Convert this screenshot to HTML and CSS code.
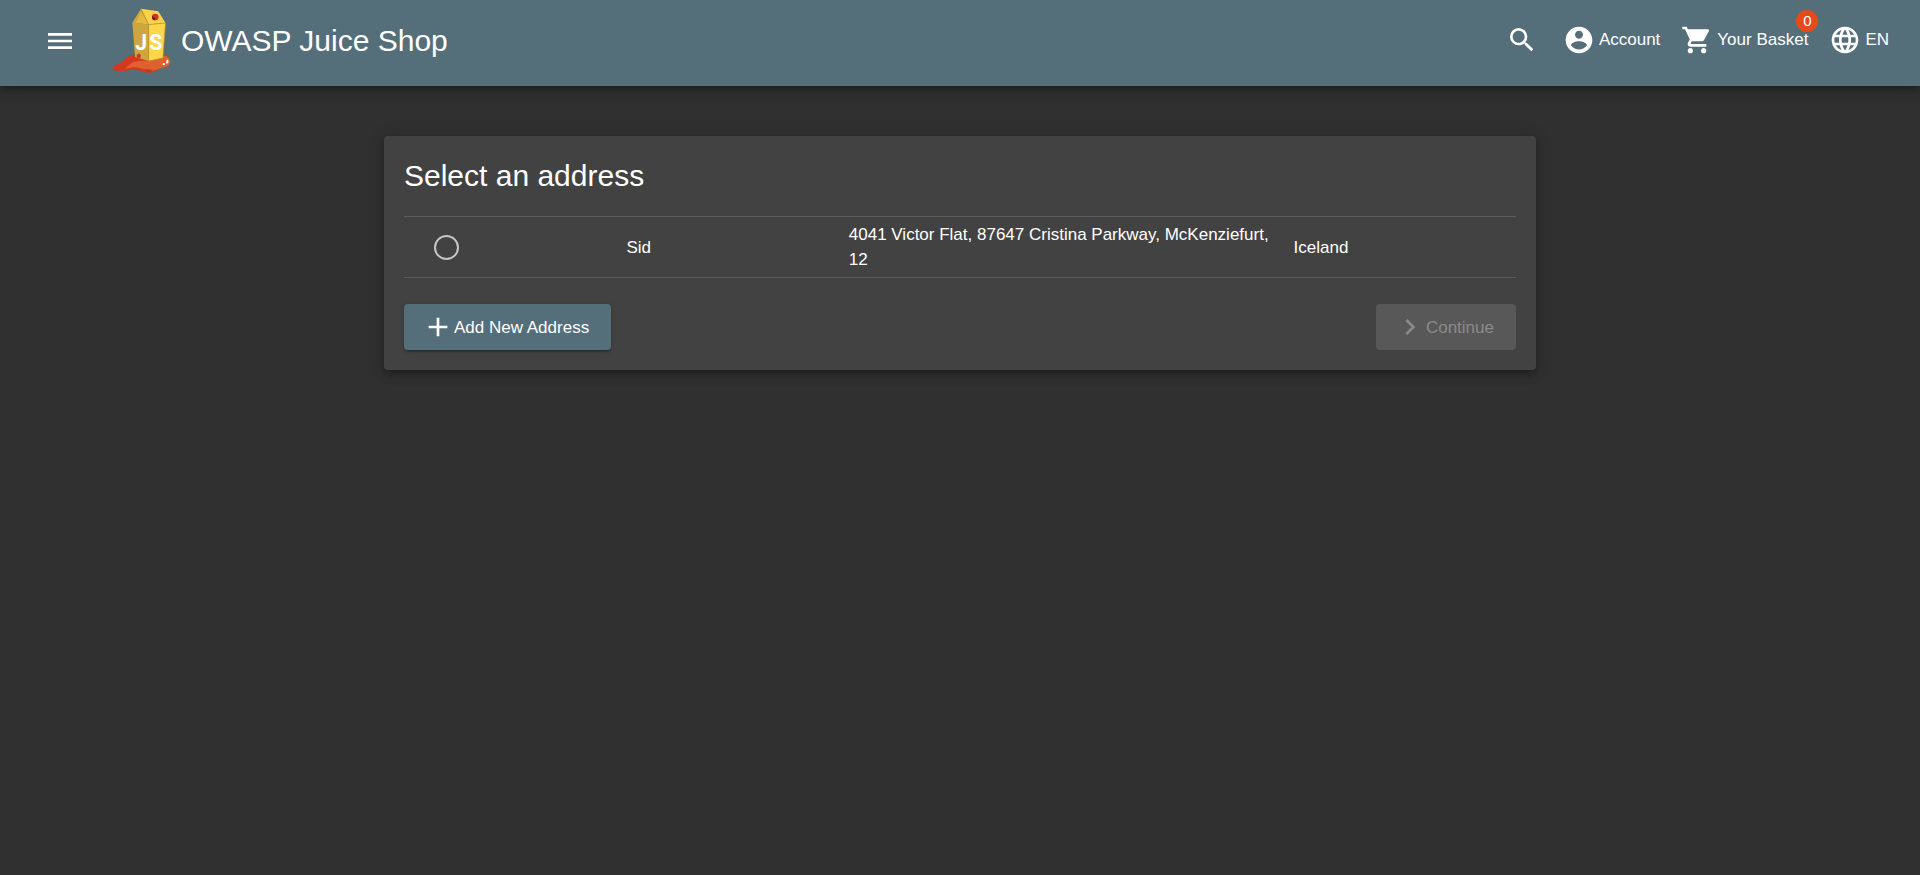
FILE: index.html
```html
<!DOCTYPE html>
<html lang="en">
<head>
<meta charset="utf-8">
<meta name="viewport" content="width=device-width, initial-scale=1">
<title>OWASP Juice Shop</title>
<link rel="stylesheet" href="styles.css">
</head>
<body>
<header class="toolbar">
  <button class="tool menu" type="button" aria-label="Open menu">
    <svg class="icon" viewBox="0 0 24 24"><path d="M3 18h18v-2H3v2zm0-5h18v-2H3v2zm0-7v2h18V6H3z"/></svg>
  </button>
  <a class="brand" href="#">
    <svg class="logo" viewBox="21 22 177 196" aria-hidden="true">
      <path fill="#d5381f" d="M22 207C21 199 35 192 51 184C65 171 78 162 100 160L173 164Q194 165 196 182Q197 198 177 201C160 204 153 218 132 217C108 216 103 205 79 208C56 213 25 214 22 207Z"/>
      <path fill="#df6130" d="M58 205C74 195 77 185 93 183C118 177 143 189 169 165Q194 165 196 182Q197 198 177 201C160 204 153 214 132 211C108 207 99 198 78 202Z"/>
      <path fill="#c8321d" d="M118 207L143 208L132 216Z"/>
      <path fill="#cda73e" d="M82 66L131 72V182L90 170Z"/>
      <path fill="#fed649" d="M131 72L182 67L174 173L131 182Z"/>
      <path fill="#d4a63a" d="M108 24L82 66L90 67L110 36Z"/>
      <path fill="#e3b942" d="M110 32L90 67L131 72Z"/>
      <path fill="#fdd24b" d="M108 24L160 32L182 67L131 72Z"/>
      <path fill="none" stroke="#b89027" stroke-width="2" d="M108 25L131 72L182 67M131 72V181M182 67L174 173L131 182"/>
      <circle cx="151" cy="49" r="10" fill="#c93420"/>
      <path fill="#76151a" d="M142 46L151 54L149 60Q139 57 142 46Z"/>
      <path fill="#cf351e" d="M96 172Q93 160 102 159Q110 161 106 173Z"/>
      <text class="logo-text" x="91" y="150">J</text>
      <text class="logo-text" x="133" y="148">S</text>
      <path fill="#fff" d="M185 178Q193 176 190 188L184 190ZM174 188L181 189L179 195L173 193Z"/>
    </svg>
    <span class="brand-name">OWASP Juice Shop</span>
  </a>
  <nav class="actions" aria-label="Main">
    <button class="tool search" type="button" aria-label="Search">
      <svg class="icon" viewBox="0 0 24 24"><path d="M15.5 14h-.79l-.28-.27A6.471 6.471 0 0 0 16 9.5 6.5 6.5 0 1 0 9.5 16c1.61 0 3.09-.59 4.23-1.57l.27.28v.79l5 4.99L20.49 19l-4.99-5zm-6 0C7.01 14 5 11.99 5 9.5S7.01 5 9.5 5 14 7.01 14 9.5 11.99 14 9.5 14z"/></svg>
    </button>
    <button class="tool" type="button">
      <svg class="icon" viewBox="0 0 24 24"><path d="M12 2C6.48 2 2 6.48 2 12s4.48 10 10 10 10-4.48 10-10S17.52 2 12 2zm0 3c1.66 0 3 1.34 3 3s-1.34 3-3 3-3-1.34-3-3 1.34-3 3-3zm0 14.2c-2.5 0-4.71-1.28-6-3.22.03-1.99 4-3.08 6-3.08 1.99 0 5.97 1.09 6 3.08-1.29 1.94-3.5 3.22-6 3.22z"/></svg>
      <span>Account</span>
    </button>
    <button class="tool" type="button">
      <svg class="icon" viewBox="0 0 24 24"><path d="M7 18c-1.1 0-1.99.9-1.99 2S5.9 22 7 22s2-.9 2-2-.9-2-2-2zM1 2v2h2l3.6 7.59-1.35 2.45c-.16.28-.25.61-.25.96 0 1.1.9 2 2 2h12v-2H7.42c-.14 0-.25-.11-.25-.25l.03-.12.9-1.63h7.45c.75 0 1.41-.41 1.75-1.03l3.58-6.49c.08-.14.12-.31.12-.48 0-.55-.45-1-1-1H5.21l-.94-2H1zm16 16c-1.1 0-1.99.9-1.99 2s.89 2 1.99 2 2-.9 2-2-.9-2-2-2z"/></svg>
      <span>Your Basket</span>
      <span class="badge">0</span>
    </button>
    <button class="tool" type="button" aria-label="Language: EN">
      <svg class="icon" viewBox="0 0 24 24"><path d="M11.99 2C6.47 2 2 6.48 2 12s4.47 10 9.99 10C17.52 22 22 17.52 22 12S17.52 2 11.99 2zm6.93 6h-2.95c-.32-1.25-.78-2.45-1.38-3.56 1.84.63 3.37 1.91 4.33 3.56zM12 4.04c.83 1.2 1.48 2.53 1.91 3.96h-3.82c.43-1.43 1.08-2.76 1.91-3.96zM4.26 14C4.1 13.36 4 12.69 4 12s.1-1.36.26-2h3.38c-.08.66-.14 1.32-.14 2s.06 1.34.14 2H4.26zm.82 2h2.95c.32 1.25.78 2.45 1.38 3.56-1.84-.63-3.37-1.9-4.33-3.56zm2.95-8H5.08c.96-1.66 2.49-2.93 4.33-3.56C8.81 5.55 8.35 6.75 8.03 8zM12 19.96c-.83-1.2-1.48-2.53-1.91-3.96h3.82c-.43 1.43-1.08 2.76-1.91 3.96zM14.34 14H9.66c-.09-.66-.16-1.32-.16-2s.07-1.35.16-2h4.68c.09.65.16 1.32.16 2s-.07 1.34-.16 2zm.25 5.56c.6-1.11 1.06-2.31 1.38-3.56h2.95c-.96 1.65-2.49 2.93-4.33 3.56zM16.36 14c.08-.66.14-1.32.14-2s-.06-1.34-.14-2h3.38c.16.64.26 1.31.26 2s-.1 1.36-.26 2h-3.38z"/></svg>
      <span>EN</span>
    </button>
  </nav>
</header>
<main class="card">
  <h1 class="card-title">Select an address</h1>
  <table class="addresses">
    <tbody>
      <tr>
        <td class="pick"><input class="radio" type="radio" name="address" id="address-1" aria-label="Sid, Iceland"></td>
        <td class="name"><label for="address-1">Sid</label></td>
        <td class="street">4041 Victor Flat, 87647 Cristina Parkway, McKenziefurt, 12</td>
        <td class="country">Iceland</td>
      </tr>
    </tbody>
  </table>
  <div class="card-actions">
    <button class="btn btn-primary" type="button">
      <svg class="icon" viewBox="0 0 24 24"><path d="M19 13h-6v6h-2v-6H5v-2h6V5h2v6h6v2z"/></svg>
      <span>Add New Address</span>
    </button>
    <button class="btn" type="button" disabled>
      <svg class="icon" viewBox="0 0 24 24"><path d="M10 6L8.59 7.41 13.17 12l-4.58 4.59L10 18l6-6z"/></svg>
      <span>Continue</span>
    </button>
  </div>
</main>
</body>
</html>
```
FILE: styles.css
```css
* {
  box-sizing: border-box;
}

body {
  margin: 0;
  min-height: 100vh;
  background: #303030;
  color: #fff;
  font: 17px/25px "Liberation Sans", Arial, sans-serif;
}

button {
  border: 0;
  font: inherit;
  color: inherit;
  background: none;
  cursor: pointer;
}

.icon {
  width: 32px;
  height: 32px;
  flex: none;
  fill: currentColor;
}

.toolbar {
  display: flex;
  align-items: center;
  padding: 8px 31px 13px 44px;
  background: #546e7a;
  box-shadow: 0 3px 5px -1px rgba(0, 0, 0, .2), 0 6px 10px rgba(0, 0, 0, .14), 0 1px 18px rgba(0, 0, 0, .12);
}

.tool {
  position: relative;
  display: flex;
  align-items: center;
  gap: 4px;
  padding: 0;
}

.brand {
  display: flex;
  align-items: center;
  gap: 10px;
  margin-left: 36px;
  color: inherit;
  text-decoration: none;
}

.logo {
  width: 59px;
  height: 65px;
}

.logo-text {
  fill: #fff;
  font: bold 64px Roboto, "Liberation Sans", sans-serif;
}

.brand-name {
  font-size: 30px;
  line-height: 40px;
}

.actions {
  display: flex;
  gap: 21px;
  margin: 0 0 2px auto;
}

.search {
  margin-right: 4px;
}

.badge {
  position: absolute;
  top: -14px;
  right: -10px;
  width: 22px;
  height: 22px;
  border-radius: 50%;
  background: #e64a19;
  font-size: 15px;
  line-height: 22px;
  text-align: center;
}

.card {
  width: 60%;
  margin: 50px auto 0;
  padding: 20px;
  border-radius: 4px;
  background: #424242;
  box-shadow: 0 3px 5px -1px rgba(0, 0, 0, .2), 0 6px 10px rgba(0, 0, 0, .14), 0 1px 18px rgba(0, 0, 0, .12);
}

.card-title {
  margin: 0 0 20px;
  font-size: 30px;
  font-weight: 400;
  line-height: 40px;
}

.addresses {
  width: 100%;
  table-layout: fixed;
  border-collapse: separate;
  border-spacing: 0;
}

.addresses td {
  height: 62px;
  padding: 0 10px 0 0;
  border: solid #5b5b5b;
  border-width: 1px 0;
}

.addresses .pick {
  width: 20%;
  padding-left: 30px;
}

.name {
  width: 20%;
}

.street {
  width: 40%;
}

.radio {
  display: block;
  appearance: none;
  width: 25px;
  height: 25px;
  margin: 0;
  border: 2px solid #c6c6c6;
  border-radius: 50%;
}

.card-actions {
  display: flex;
  justify-content: space-between;
  margin-top: 26px;
}

.btn {
  display: flex;
  align-items: center;
  padding: 7px 22px 7px 18px;
  border-radius: 4px;
}

.btn-primary {
  background: #546e7a;
  box-shadow: 0 3px 1px -2px rgba(0, 0, 0, .2), 0 2px 2px rgba(0, 0, 0, .14), 0 1px 5px rgba(0, 0, 0, .12);
}

.btn:disabled {
  background: #585858;
  color: #8a8a8a;
  cursor: default;
}
```
